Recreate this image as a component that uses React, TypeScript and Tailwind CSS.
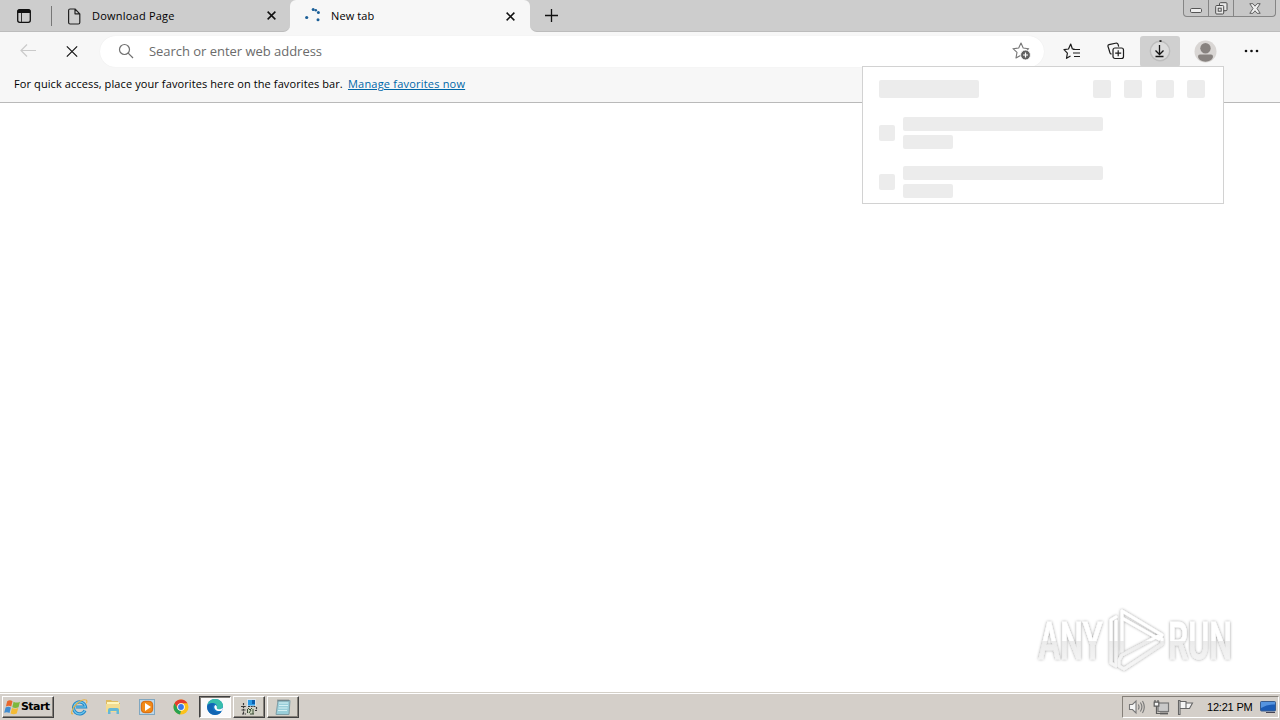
import type { ReactNode } from "react";

const UI = "font-['Open_Sans','Noto_Sans',sans-serif]";

function Cross({ size = 9, w = 1.7 }: { size?: number; w?: number }) {
  return (
    <svg width={size} height={size} viewBox="0 0 10 10" fill="none" stroke="#111" strokeWidth={w}>
      <path d="M.7.7l8.6 8.6M9.3.7L.7 9.3" />
    </svg>
  );
}

function TabStrip() {
  return (
    <div className="flex h-8 shrink-0 items-start bg-[#f7f7f7]">
      <div className="flex h-8 w-[290px] items-center rounded-br-[7px] border-b border-[#bcbcbc] bg-[#cdcdcd]">
        <svg className="ml-4 mt-px" width="16" height="16" viewBox="0 0 16 16" fill="none">
          <rect x="1.7" y="1.7" width="12.6" height="12.6" rx="2" stroke="#111" strokeWidth="1.3" />
          <path d="M1.5 5V3q0-1.5 1.5-1.5h10q1.500 0 1.500 1.500v2z" fill="#111" />
          <path d="M5.500 5v9" stroke="#333" />
        </svg>
        <div className="ml-[19px] h-5 w-px bg-[#777]" />
        <svg className="ml-[15px] mt-px" width="14" height="17" viewBox="0 0 14 17" fill="none" stroke="#222" strokeWidth="1.2" strokeLinejoin="round">
          <path d="M1.600 2.500q0-1.500 1.500-1.500H8l4.800 4.800v8.700q0 1.500-1.500 1.500H3.100q-1.500 0-1.500-1.500zM8 1v4.800h4.800" />
        </svg>
        <span className={`${UI} ml-[11px] w-[175px] whitespace-nowrap text-[11px] leading-4 tracking-[0.22px] text-black`}>Download Page</span>
        <Cross />
      </div>
      <div className="h-8 w-[240px] bg-[#cdcdcd]">
        <div className="flex h-8 items-center rounded-t-[6px] bg-[#f7f7f7]">
          <svg className="ml-[14px]" width="18" height="18" viewBox="0 0 18 18" fill="#1b5f98">
            <circle cx="2.700" cy="10.500" r="1.600" /><circle cx="9.200" cy="2.600" r="1.500" /><circle cx="14.400" cy="5.600" r="1.500" /><circle cx="14" cy="12.700" r="1.500" /><circle cx="11.800" cy="3.300" r="1.300" />
          </svg>
          <span className={`${UI} ml-[9px] w-[175px] whitespace-nowrap text-[11px] leading-4 tracking-[0.1px] text-black`}>New tab</span>
          <Cross />
        </div>
      </div>
      <div className="flex h-8 flex-1 items-start justify-between rounded-bl-[7px] border-b border-[#bcbcbc] bg-[#cdcdcd]">
        <svg className="ml-[14px] mt-2" width="15" height="15" viewBox="0 0 15 15" stroke="#111" strokeWidth="1.300">
          <path d="M7.500 1v13M1 7.500h13" />
        </svg>
        <div className="mr-1 flex h-[17px] w-[93px] rounded-b-[4px] border border-t-0 border-[#858585] bg-[#c7c7c7]">
          <div className="flex w-[25px] items-end justify-center border-r border-[#858585] pb-[3px]">
            <svg width="12" height="5" viewBox="0 0 12 5"><rect x=".5" y=".5" width="11" height="4" rx="1.200" fill="#eee" stroke="#555" /></svg>
          </div>
          <div className="flex w-[25px] items-center justify-center border-r border-[#858585]">
            <svg width="13" height="13" viewBox="0 0 13 13" fill="#e8e8e8" stroke="#4c4c4c">
              <rect x="4.500" y=".7" width="7.500" height="8" rx="1" /><rect x=".7" y="3.500" width="8" height="8.500" rx="1" /><rect x="3.200" y="6.200" width="3" height="3" />
            </svg>
          </div>
          <div className="flex flex-1 items-center justify-center">
            <svg width="12" height="11" viewBox="0 0 12 11" fill="#f0f0f0" stroke="#555" strokeWidth=".9">
              <path d="M.8.700h3.100L6 3.200 8.100.700h3.100L8 5.500l3.200 4.800H8.100L6 7.800l-2.100 2.500H.8L4 5.500z" />
            </svg>
          </div>
        </div>
      </div>
    </div>
  );
}

function Toolbar() {
  return (
    <div className="flex h-[38px] shrink-0 items-center bg-[#f7f7f7]">
      <svg className="ml-5" width="17" height="14" viewBox="0 0 17 14" fill="none" stroke="#cacaca" strokeWidth="1.200"><path d="M16 6.500H1.200M7 .5l-6 6 6 6" /></svg>
      <div className="ml-[29px] flex w-3"><Cross size={13} w={0.95} /></div>
      <div className="ml-[22px] flex h-[31px] w-[944px] items-center rounded-full bg-white shadow-[0_0_1px_#e4e4e4]">
        <svg className="ml-[18px]" width="16" height="16" viewBox="0 0 16 16" fill="none" stroke="#707070" strokeWidth="1.200"><circle cx="6.500" cy="6.500" r="5" /><path d="M10.200 10.200L15 15" /></svg>
        <span className={`${UI} ml-[15px] whitespace-nowrap text-[13px] leading-5 tracking-[-0.03px] text-[#6b6b6b]`}>Search or enter web address</span>
        <svg className="ml-auto mr-[13px]" width="19" height="18" viewBox="0 0 19 18" fill="none">
          <path d="M9 1l2.200 5 5.500.7-4 3.700 1 5.500L9 13.200l-5 2.700 1-5.500L1 6.700l5.700-.7z" stroke="#777" strokeWidth="1.100" strokeLinejoin="round" />
          <circle cx="13.500" cy="13" r="4.900" fill="#606060" stroke="#fff" strokeWidth=".8" /><path d="M13.500 10.500v5M11 13h5" stroke="#fff" strokeWidth="1.200" />
        </svg>
      </div>
      <svg className="ml-[19px]" width="18" height="17" viewBox="0 0 18 17" fill="none" stroke="#1c1c1c" strokeWidth="1.200" strokeLinejoin="round">
        <path d="M11.500 6H9.400L7.700 1 5.500 6 1 6.600l3.400 3.500-.9 5.200 4-2.300M10 6.500h7M10 10h7M11 13.500h6" />
      </svg>
      <svg className="ml-[26px]" width="18" height="18" viewBox="0 0 18 18" fill="none" stroke="#1c1c1c" strokeWidth="1.200">
        <path d="M4.500 12.300L3.300 11.500Q2.700 10.500 2 7.500L.9 4.200Q.8 3 2 2.700L9.600 1q1 0 1.400 1.200l.7 2.500" /><rect x="6" y="6" width="10.500" height="10.500" rx="2" /><path d="M11.200 8.200v6M8.200 11.200h6" />
      </svg>
      <div className="ml-[15px] flex h-[31px] w-10 items-center justify-center rounded-[3px] bg-[#d0d0d0]">
        <svg width="22" height="24" viewBox="0 0 22 24" fill="none" stroke="#161616" strokeWidth="1.300">
          <circle cx="11" cy="12" r="9.700" stroke="#bdbdbd" fill="#dcdcdc" strokeWidth="1.400" /><path d="M10.500 6v9.500M6.500 11.500l4 4 4-4M6.500 17.500h8" /><path d="M11.500 1.200v1.700" strokeWidth="2" />
        </svg>
      </div>
      <svg className="ml-[14px]" width="23" height="23" viewBox="0 0 23 23"><circle cx="11.500" cy="11.500" r="11" fill="#d9d6d4" /><circle cx="11.500" cy="8.200" r="5.200" fill="#87827f" /><path d="M4 16.500q0-2 2-2h11q2 0 2 2c0 3-4 5.200-7.500 5.200S4 19.500 4 16.500z" fill="#87827f" /></svg>
      <svg className="ml-[27px]" width="15" height="4" viewBox="0 0 15 4" fill="#111"><circle cx="2" cy="2" r="1.300" /><circle cx="7.500" cy="2" r="1.300" /><circle cx="13" cy="2" r="1.300" /></svg>
    </div>
  );
}

function DownloadsFlyout() {
  return (
    <div className="absolute left-[862px] top-[66px] h-[138px] w-[362px] border border-[#d2d2d2] bg-white px-4 pt-[13px]">
      <div className="flex h-[18px] gap-[14px]">
        <div className="mr-[100px] w-[100px] rounded-[2px] bg-[#ececec]" />
        <div className="w-[18px] rounded-[2px] bg-[#ececec]" />
        <div className="-ml-px w-[18px] rounded-[2px] bg-[#ececec]" />
        <div className="w-[18px] rounded-[2px] bg-[#ececec]" />
        <div className="-ml-px w-[18px] rounded-[2px] bg-[#ececec]" />
      </div>
      <div className="mt-[19px] flex flex-col gap-[17px]">
        {[0, 1].map((i) => (
          <div key={i} className="flex h-8 items-center gap-2">
            <div className="size-4 rounded-[2px] bg-[#ececec]" />
            <div className="flex flex-col gap-1">
              <div className="h-[14px] w-[200px] rounded-[2px] bg-[#ececec]" />
              <div className="h-[14px] w-[50px] rounded-[2px] bg-[#ececec]" />
            </div>
          </div>
        ))}
      </div>
    </div>
  );
}

function Watermark() {
  return (
    <svg className="absolute left-[1030px] top-[600px]" width="230" height="80" viewBox="0 0 230 80">
      <defs>
        <linearGradient id="fade" gradientUnits="userSpaceOnUse" x1="0" y1="20" x2="0" y2="62">
          <stop offset="0" stopColor="#fff" /><stop offset=".49" stopColor="#fff" /><stop offset=".5" stopColor="#ebebeb" /><stop offset="1" stopColor="#f5f5f5" />
        </linearGradient>
        <filter id="glow" x="-10%" y="-20%" width="120%" height="140%">
          <feDropShadow dx="0" dy="0" stdDeviation="1.500" floodColor="#000" floodOpacity=".42" />
        </filter>
      </defs>
      <g filter="url(#glow)">
        <g fill="url(#fade)" stroke="url(#fade)" strokeWidth=".5" fontFamily="Roboto, Liberation Sans, sans-serif" fontSize="51" fontWeight="500">
          <text x="8.500" y="59" textLength="64" lengthAdjust="spacingAndGlyphs">ANY</text>
          <text x="138" y="59" textLength="64" lengthAdjust="spacingAndGlyphs">RUN</text>
        </g>
        <g fill="none" stroke="url(#fade)" strokeWidth="3" strokeLinejoin="round" strokeLinecap="round">
          <path d="M86 17l-5 3v43l5 3V21" />
          <path d="M92 51V11l40 24-3 4-37-21" />
          <path d="M92 55l36-19 4 3v5L94 69l-5-3v-6z" />
        </g>
      </g>
    </svg>
  );
}

function TaskButton({ children, active = false }: { children: ReactNode; active?: boolean }) {
  return (
    <div className={active
      ? "flex h-[22px] w-8 items-center justify-center border border-b-white border-l-[#404040] border-r-white border-t-[#404040] bg-[#fbfafa] shadow-[inset_1px_1px_0_#85817b]"
      : "flex h-[22px] w-8 items-center justify-center border border-b-[#404040] border-l-white border-r-[#404040] border-t-white bg-[#d4d0c8] shadow-[inset_-1px_-1px_0_#858079]"}>
      {children}
    </div>
  );
}

function Taskbar() {
  return (
    <div className="flex h-7 shrink-0 items-start border-t border-[#d4d0c8] bg-[#d4cfc9] shadow-[inset_0_1px_0_#fff]">
      <div className="ml-[2px] mt-[3px] flex h-[22px] w-[52px] items-center border border-b-[#404040] border-l-white border-r-[#404040] border-t-white pl-px shadow-[inset_-1px_-1px_0_#858079]">
        <svg width="17" height="17" viewBox="0 0 16 16" className="shrink-0">
          <path d="M3 2q2.500-1.500 5 0L6.800 7Q4.500 5.800 1.800 7z" fill="#e8672c" /><path d="M9 2.500q2.800 1.700 6 0L13.700 7.700q-3 1.500-5.900 0z" fill="#7db83d" />
          <path d="M1.500 8q2.600-1.300 5 0l-1.300 5.200Q2.800 12 .2 13z" fill="#408cd0" /><path d="M7.500 8.500q3 1.500 5.900 0L12 13.700q-3 1.400-5.800 0z" fill="#f4bb35" />
        </svg>
        <span className="whitespace-nowrap font-['DejaVu_Sans',sans-serif] text-[11px] font-bold leading-4 tracking-[-0.55px] text-black">Start</span>
      </div>
      <div className="ml-[17px] mt-[5px] flex gap-[17px]">
        <svg width="17" height="18" viewBox="0 0 17 18" fill="none">
          <path d="M14 12.500A6 6 0 1 1 14.500 9H5" stroke="#2588c7" strokeWidth="3.200" /><path d="M14 12.500A6 6 0 1 1 14.500 9H5" stroke="#70c9ef" strokeWidth="1.200" />
          <path d="M2 15.500Q.2 17 .8 13.500C2 8 9 1.500 14 1.800c2 0 2.300 1.500 1.400 3.400" stroke="#e7b345" strokeWidth="1.100" />
        </svg>
        <svg width="17" height="18" viewBox="0 0 17 18">
          <path d="M1 2h5l1 1h6v2h2v9H1z" fill="#dfbb61" /><path d="M2 4h12v2H2z" fill="#fff6bc" /><path d="M1 6h14v8H1z" fill="#f3dc91" /><path d="M3 16v-4q0-2 2-2h7q2 0 2 2v4h-2.500v-3h-6v3z" fill="#65b8d6" />
        </svg>
        <svg width="17" height="18" viewBox="0 0 17 18">
          <rect x=".5" y="1.500" width="15" height="15" fill="#bdd7e9" stroke="#80a7c0" /><rect x="2.300" y="3.300" width="11.400" height="11.400" rx="3.500" fill="#f28a16" stroke="#d66609" /><path d="M6 5l6 4-6 4z" fill="#fff" />
        </svg>
        <svg width="16" height="18" viewBox="0 0 16 18">
          <circle cx="8" cy="9" r="7.500" fill="#fcc21b" /><path d="M1.500 5.200A7.500 7.500 0 0 1 14.500 5.300H8a3.800 3.800 0 0 0-3.300 5.600z" fill="#e33b2e" /><path d="M1.500 5.200l3.200 5.600A3.800 3.800 0 0 0 8 12.800l-1 3.600A7.500 7.500 0 0 1 1.500 5.200z" fill="#26a251" /><circle cx="8" cy="9" r="3.800" fill="#fff" /><circle cx="8" cy="9" r="2.900" fill="#3979e8" />
        </svg>
      </div>
      <div className="ml-[10px] mt-[3px] flex gap-[2px]">
        <TaskButton active>
          <svg width="18" height="18" viewBox="0 0 18 18">
            <circle cx="9" cy="9" r="8" fill="#1677c5" /><path d="M1.200 8C2 3 5.300 1 9 1c5 0 8 3.500 8 6.500 0 2.600-2 3.800-4.200 3.800-2.500 0-2.700-1.400-2-2.100C12 7.300 9.500 5 6.500 5 4 5 2 6.300 1.200 8z" fill="#37bdac" /><path d="M1.200 8C2.700 5 7 4.200 9.500 6.500 7 6.500 6 8.500 7 11c1 2.600 4.500 4 8.500 2.600C13.500 17 8 18 4.500 15.500 2 13.700 1 11 1.200 8z" fill="#1265b3" /><path d="M9.300 7c-2 1.500-1 5.400 3 6 2.200.3 4-.5 4-.5l.7-3c-2 2.700-6.500 2-6.200.2.300-1 0-2-1.500-2.700z" fill="#fff" />
          </svg>
        </TaskButton>
        <TaskButton>
          <svg width="18" height="18" viewBox="0 0 18 18">
            <rect x="7.500" y="1.500" width="8" height="6.500" fill="#2a9be6" stroke="#d9e3ec" /><path d="M12 2h3v4h-3z" fill="#0d5fae" />
            <path d="M3.500 5v3M1 8.500h5M3.500 8v8M1.500 12h4M2 16h4M8 8.500h8M16.500 9v3M15 12.500h2" stroke="#3b3b3b" strokeWidth="1.200" strokeDasharray="2 .7" fill="none" />
            <path d="M8 10h6v6H8z" fill="#cdd6bd" /><path d="M8 10l2 2 2-2M9 15l2-3M13 11v5M7.500 11v4M10 16h4" stroke="#3b4a37" fill="none" />
          </svg>
        </TaskButton>
        <TaskButton>
          <svg width="16" height="18" viewBox="0 0 16 18">
            <path d="M3 2.500h12l-1 14H1z" fill="#99ced9" stroke="#7f9da5" /><path d="M4 5h9M4 7.500h9M3.500 10h9M3 12.500h9" stroke="#d4f0f3" /><path d="M3 1.500v2M5 1.500v2M7 1.500v2M9 1.500v2M11 1.500v2M13 1.500v2" stroke="#647074" />
          </svg>
        </TaskButton>
      </div>
      <div className="ml-auto mr-px mt-[3px] flex h-[22px] w-[157px] items-center border border-b-white border-l-[#858079] border-r-white border-t-[#858079]">
        <svg className="ml-[5px]" width="18" height="16" viewBox="0 0 18 16" fill="none" stroke="#777" strokeWidth="1.100"><path d="M1.500 5.500h3L8 2v12l-3.500-3.500h-3z" fill="#f5f5f5" /><path d="M10.300 5.500q1.500 2.500 0 5M12.400 3.500q3 4.500 0 9M14.500 2q3.600 6 0 12" /></svg>
        <svg className="ml-[7px]" width="17" height="17" viewBox="0 0 17 17" fill="none" stroke="#5d5d5d" strokeWidth="1.200"><rect x="5" y="4" width="10.500" height="8.500" fill="#c9c9c9" stroke="#777" /><path d="M7 14.500h8" strokeWidth="1.800" /><path d="M1.200 3.200h4.600v4H1.200z" fill="#f5f5f5" /><path d="M2 1v2M5 1v2M3.500 7v7.500H7" /></svg>
        <svg className="ml-[7px]" width="17" height="16" viewBox="0 0 17 16" fill="#f5f5f5" stroke="#666" strokeWidth="1.100"><path d="M1.500 1.500h1.500v14H1.500zM3 2.500h6v7H3zM9 4h6.500l-3 5.500H9" /></svg>
        <span className="ml-[13px] w-[48px] whitespace-nowrap font-['Liberation_Sans',sans-serif] text-[11px] leading-4 tracking-[-0.2px] text-black">12:21 PM</span>
        <svg className="ml-[5px]" width="16" height="14" viewBox="0 0 16 14"><rect x=".5" y="1.500" width="15" height="9.500" rx="1" fill="#1c5cb5" stroke="#3a5d8d" /><path d="M1 2h14v2.500Q8 4 1 8z" fill="#5594df" /><path d="M6 12h9v1H6z" fill="#445" /></svg>
      </div>
    </div>
  );
}

export default function App() {
  return (
    <div className="relative flex h-[720px] w-[1280px] flex-col overflow-hidden bg-white">
      <TabStrip />
      <Toolbar />
      <div className={`${UI} flex h-[33px] shrink-0 items-start border-b border-[#b9b9b9] bg-[#f7f7f7] pl-[14px] pt-[6px] text-[11px] leading-4`}>
        <span className="w-[334px] whitespace-nowrap tracking-[0.1px] text-black">For quick access, place your favorites here on the favorites bar.</span>
        <span className="whitespace-nowrap tracking-[0.2px] text-[#0067a8] underline">Manage favorites now</span>
      </div>
      <main className="flex-1 bg-white" />
      <Taskbar />
      <Watermark />
      <DownloadsFlyout />
    </div>
  );
}
